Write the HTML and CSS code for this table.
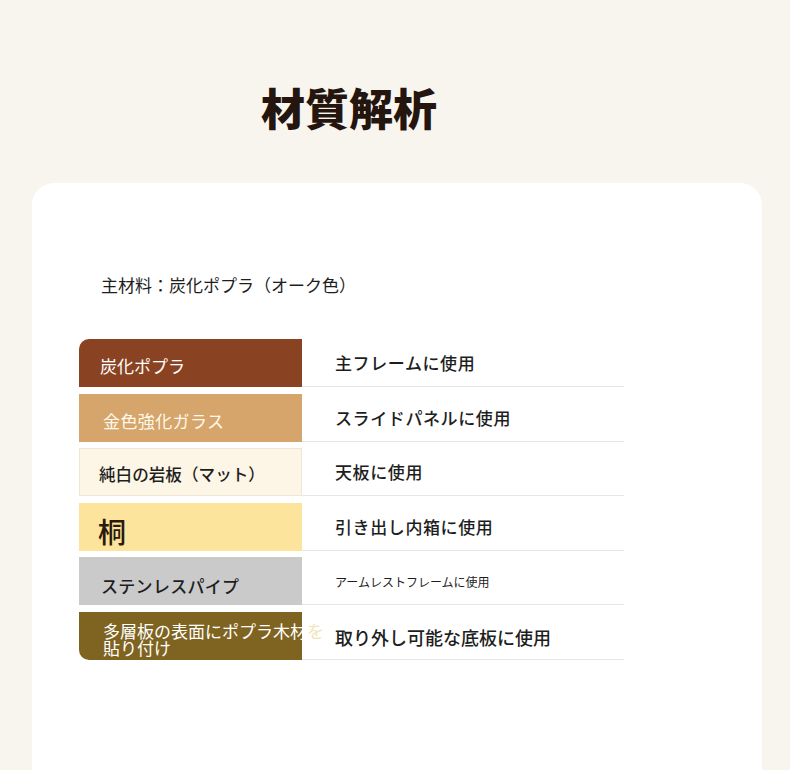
FILE: index.html
```html
<!DOCTYPE html>
<html lang="ja">
<head>
<meta charset="utf-8">
<title>材質解析</title>
<link rel="stylesheet" href="styles.css">
</head>
<body>
<header class="hero">
  <h1 class="title">材質解析</h1>
</header>
<main class="card">
  <p class="intro">主材料：炭化ポプラ（オーク色）</p>
  <div class="table">
    <div class="mat mat-poplar">炭化ポプラ</div>
    <div class="use">主フレームに使用</div>

    <div class="mat mat-glass">金色強化ガラス</div>
    <div class="use">スライドパネルに使用</div>

    <div class="mat mat-stone">純白の岩板（マット）</div>
    <div class="use">天板に使用</div>

    <div class="mat mat-paulownia">桐</div>
    <div class="use">引き出し内箱に使用</div>

    <div class="mat mat-steel">ステンレスパイプ</div>
    <div class="use use-small">アームレストフレームに使用</div>

    <div class="mat mat-ply"><span>多層板の表面にポプラ木材<span class="fade">を</span><br>貼り付け</span></div>
    <div class="use use-large">取り外し可能な底板に使用</div>
  </div>
</main>
</body>
</html>
```
FILE: styles.css
```css
* { box-sizing: border-box; }

html, body {
  margin: 0;
  padding: 0;
}

body {
  background: #f8f5ee;
  font-family: "Noto Sans CJK JP", "Noto Sans", sans-serif;
  color: #222;
  height: 770px;
  overflow: hidden;
}

.hero {
  padding: 77px 0 0 261px;
  height: 183px;
}

.title {
  margin: 0;
  font-size: 44px;
  line-height: 60px;
  font-weight: 900;
  color: #24160e;
}

.card {
  margin: 0 28px 0 32px;
  background: #ffffff;
  border-radius: 22px;
  padding: 90px 0 0 47px;
  min-height: 640px;
}

.intro {
  margin: 0 0 42px 0;
  padding-left: 22px;
  font-size: 17px;
  line-height: 24px;
  font-weight: 400;
  color: #1e1e1e;
}

.table {
  display: grid;
  grid-template-columns: 223px 322px;
  row-gap: 6.6px;
}

.mat {
  height: 48px;
  display: flex;
  align-items: center;
  padding: 5px 0 0 21px;
  font-size: 17px;
  line-height: 17px;
  font-weight: 500;
  white-space: nowrap;
  color: #fff;
}

.use {
  display: flex;
  align-items: center;
  padding-left: 33px;
  font-size: 17px;
  font-weight: 500;
  letter-spacing: 0.6px;
  color: #1e1e1e;
  border-bottom: 1px solid #e6e6e6;
}

.use-small {
  font-size: 12px;
  font-weight: 400;
  letter-spacing: 0;
  padding-top: 2px;
}

.use-large {
  font-size: 18px;
  letter-spacing: 0;
  padding-top: 4px;
}

.mat-poplar {
  background: #8a4322;
  border-top-left-radius: 10px;
  font-weight: 400;
}

.mat-glass {
  background: #d5a56b;
  color: #fff8ea;
  padding-left: 24px;
  letter-spacing: 0.4px;
  font-weight: 400;
}

.mat-stone {
  background: #fdf6e6;
  border: 1px solid #efe7d6;
  color: #1e1e1e;
  font-size: 16.6px;
  padding-left: 19px;
}

.mat-paulownia {
  background: #fce49c;
  color: #2a1a0c;
  font-size: 28px;
  padding-left: 19px;
  padding-top: 10px;
}

.mat-steel {
  background: #cacaca;
  color: #1e1e1e;
  padding-left: 22px;
  padding-top: 8px;
  letter-spacing: 0.3px;
}

.mat-ply {
  background: #7f6421;
  border-bottom-left-radius: 10px;
  padding-left: 24px;
  padding-top: 8px;
  line-height: 16.5px;
  font-weight: 400;
  position: relative;
  z-index: 1;
}

.fade {
  color: #f1e4b8;
}
```
